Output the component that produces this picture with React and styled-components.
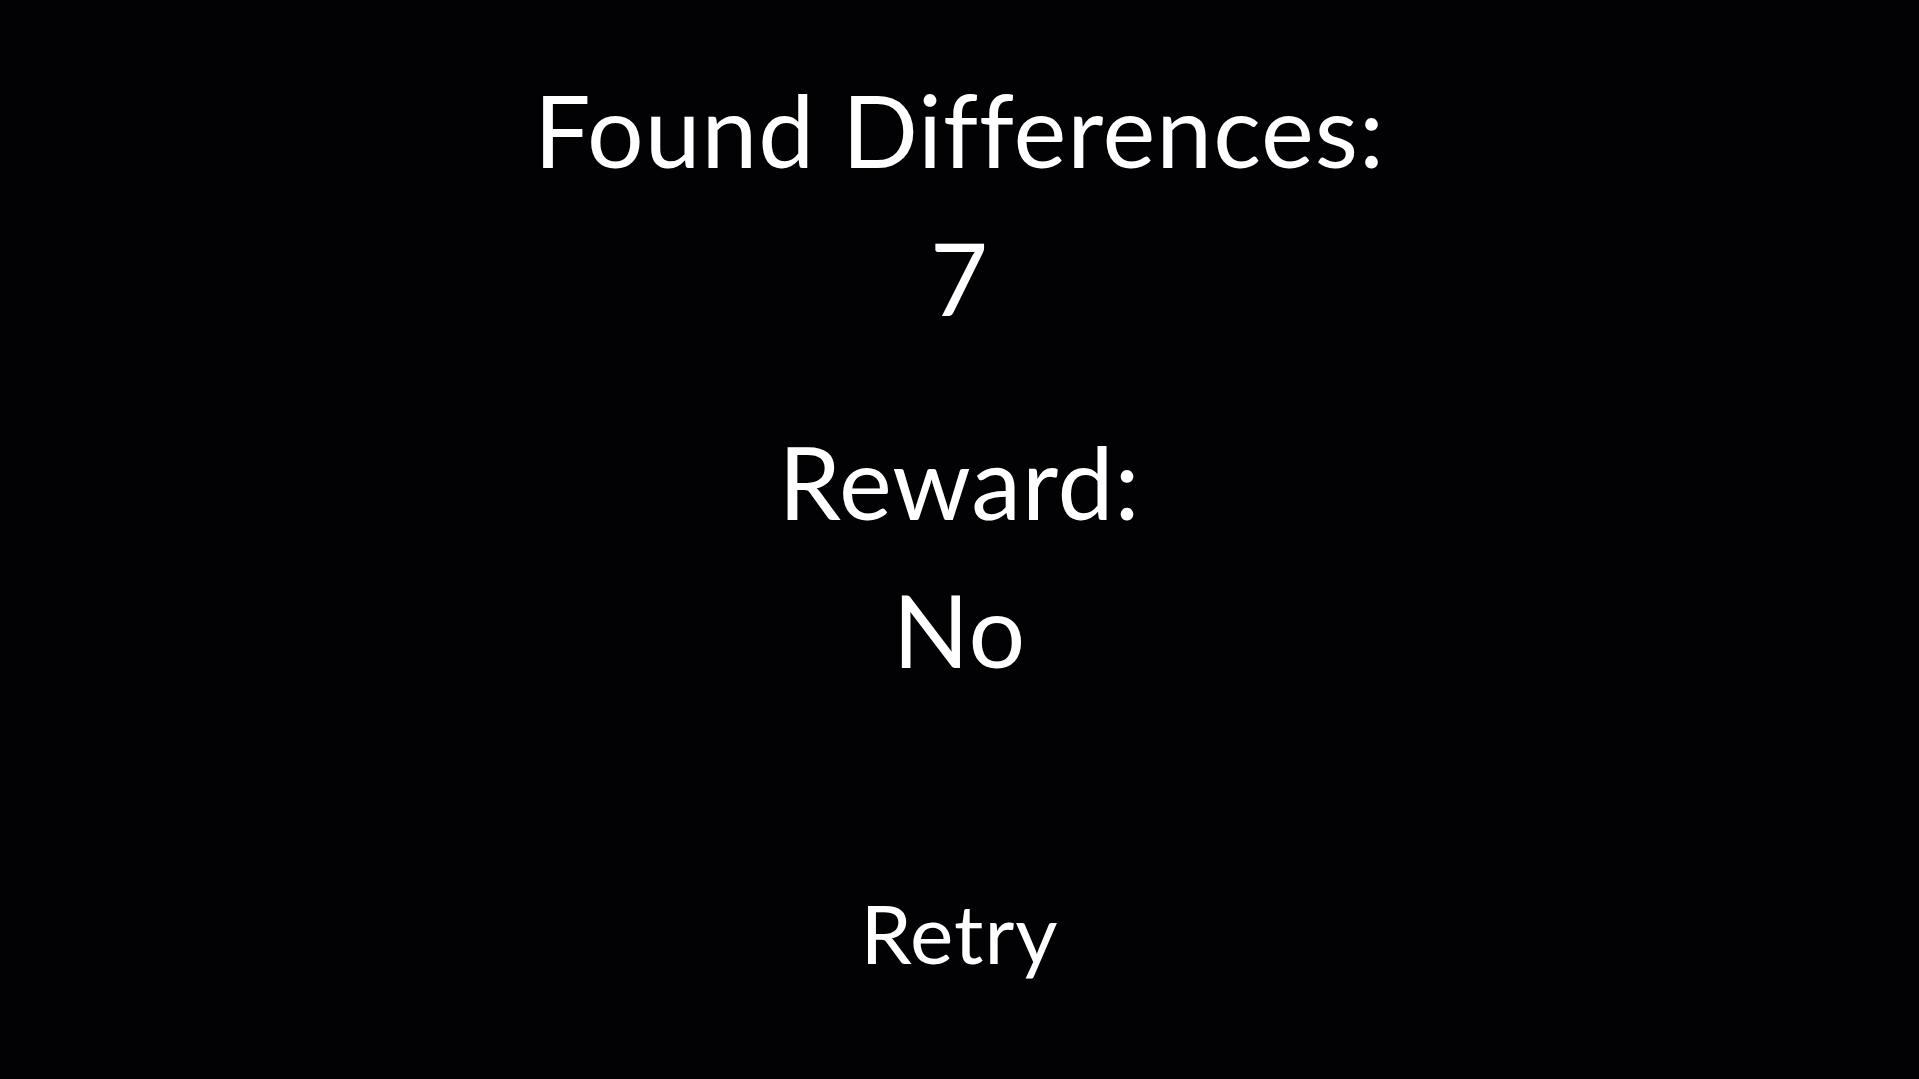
import React from "react";
import styled, { createGlobalStyle } from "styled-components";

const Global = createGlobalStyle`
  html, body { margin: 0; padding: 0; background: #020104; }
  body { font-family: Lato, "Open Sans", sans-serif; }
`;

const Screen = styled.main`
  width: 100%;
  min-height: 1079px;
  background: #020104;
  color: #ffffff;
  display: flex;
  flex-direction: column;
  align-items: center;
  padding-top: 55px;
  box-sizing: border-box;
`;

const Stat = styled.section`
  display: flex;
  flex-direction: column;
  align-items: center;
  margin-bottom: ${(p) => p.$gap || 0}px;
`;

const Line = styled.div`
  font-family: Lato, "Open Sans", sans-serif;
  font-size: 100px;
  line-height: 148px;
  font-weight: 400;
  letter-spacing: 1px;
  white-space: nowrap;
`;

const RetryButton = styled.button`
  background: transparent;
  border: none;
  color: #ffffff;
  font-family: Lato, "Open Sans", sans-serif;
  font-size: 82px;
  line-height: 100px;
  padding: 0;
  cursor: pointer;
  letter-spacing: 1px;
`;

export default function App() {
  return (
    <>
      <Global />
      <Screen>
        <Stat $gap={56}>
          <Line>Found Differences:</Line>
          <Line>7</Line>
        </Stat>
        <Stat $gap={179}>
          <Line>Reward:</Line>
          <Line>No</Line>
        </Stat>
        <RetryButton>Retry</RetryButton>
      </Screen>
    </>
  );
}
